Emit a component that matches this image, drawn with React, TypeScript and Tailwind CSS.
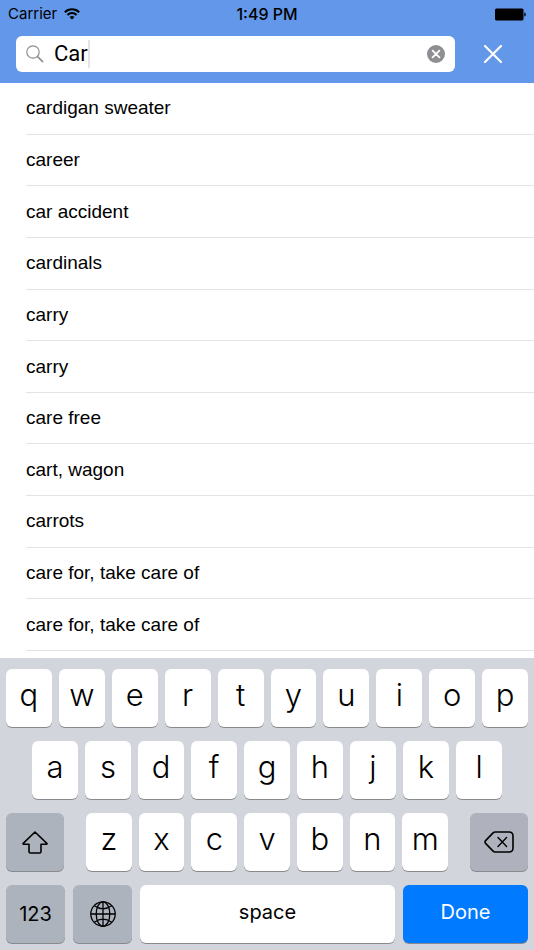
import { useState } from 'react'
import type { ReactNode } from 'react'

const suggestions = [
  'cardigan sweater',
  'career',
  'car accident',
  'cardinals',
  'carry',
  'carry',
  'care free',
  'cart, wagon',
  'carrots',
  'care for, take care of',
  'care for, take care of',
]

const topRow = ['q', 'w', 'e', 'r', 't', 'y', 'u', 'i', 'o', 'p']
const middleRow = ['a', 's', 'd', 'f', 'g', 'h', 'j', 'k', 'l']
const bottomRow = ['z', 'x', 'c', 'v', 'b', 'n', 'm']

interface LetterKeyProps {
  letter: string
  onPress: (letter: string) => void
}

function LetterKey({ letter, onPress }: LetterKeyProps) {
  return (
    <button
      type="button"
      onClick={() => onPress(letter)}
      className="flex h-[58px] min-w-0 flex-1 items-center justify-center rounded-md bg-white pb-1.5 text-[31px] leading-9 font-light shadow-[0_1px_0_#898a8d]"
    >
      {letter}
    </button>
  )
}

interface ActionKeyProps {
  label: string
  onClick?: () => void
  className: string
  children: ReactNode
}

function ActionKey({ label, onClick, className, children }: ActionKeyProps) {
  return (
    <button
      type="button"
      aria-label={label}
      onClick={onClick}
      className={`flex h-[58px] items-center justify-center rounded-md text-xl shadow-[0_1px_0_#898a8d] ${className}`}
    >
      {children}
    </button>
  )
}

export default function App() {
  const [query, setQuery] = useState('Car')

  const type = (text: string) => setQuery(query + text)

  return (
    <div className="flex min-h-screen flex-col bg-white font-['Inter',sans-serif] text-black">
      {/* Header */}
      <header className="bg-[#6297e9] pb-[11px]">
        <div className="grid h-7 grid-cols-3 items-center px-2 text-[15px] leading-5">
          <div className="flex items-center gap-[7px]">
            <span>Carrier</span>
            <svg viewBox="0 0 16 12" className="h-3 w-4" fill="none" stroke="currentColor" strokeWidth="2">
              <path d="M.8 4.2a10.2 10.2 0 0 1 14.4 0" />
              <path d="M3.4 7a6.5 6.5 0 0 1 9.2 0" />
              <path d="M8 11.6 5.5 9.1a3.6 3.6 0 0 1 5 0z" fill="currentColor" stroke="none" />
            </svg>
          </div>
          <div className="text-center text-base leading-5 font-medium">1:49 PM</div>
          <svg viewBox="0 0 32 13" className="h-[13px] w-8 justify-self-end" fill="currentColor">
            <rect x="1" y="0.5" width="28.5" height="12" rx="1.5" />
            <path d="M30.3 4.5c2 .6 2 3.4 0 4z" />
          </svg>
        </div>

        <div className="flex items-center pt-2 pl-4">
          <div className="flex h-9 flex-1 items-center rounded-md bg-white px-2.5">
            <label htmlFor="search" className="flex h-full flex-1 cursor-text items-center">
              <svg viewBox="0 0 18 18" className="mr-2.5 h-[18px] w-[18px]" fill="none" stroke="#8e8e93" strokeLinecap="round">
                <circle cx="7" cy="7" r="6.2" strokeWidth="1.2" />
                <path d="m11.6 11.6 5 5" strokeWidth="1.6" />
              </svg>
              <input
                id="search"
                type="text"
                aria-label="Search"
                value={query}
                onChange={(e) => setQuery(e.target.value)}
                className="field-sizing-content bg-transparent font-['Roboto',sans-serif] text-[22px] leading-7 outline-none"
              />
              <span className="h-7 w-0.5 bg-[#e4e4e6]" />
            </label>
            <button type="button" aria-label="Clear text" onClick={() => setQuery('')}>
              <svg viewBox="0 0 18 18" className="h-[18px] w-[18px]">
                <circle cx="9" cy="9" r="9" fill="#8e8e93" />
                <path d="m5.6 5.6 6.8 6.8m0-6.8-6.8 6.8" stroke="white" strokeWidth="1.8" strokeLinecap="round" />
              </svg>
            </button>
          </div>
          <button type="button" aria-label="Close" className="flex w-[79px] justify-center pr-1">
            <svg viewBox="0 0 18 18" className="h-[18px] w-[18px]" stroke="white" strokeWidth="2.2" strokeLinecap="round">
              <path d="m1 1 16 16M17 1 1 17" />
            </svg>
          </button>
        </div>
      </header>

      {/* Suggestions */}
      <ul className="flex flex-1 flex-col pb-[7px] pl-[26px] font-['Liberation_Sans',Arial,sans-serif] text-[19px] leading-6">
        {suggestions.map((item, index) => (
          <li key={index} className="flex flex-1 items-center border-b border-[#e3e3e5]">
            {item}
          </li>
        ))}
      </ul>

      {/* Keyboard */}
      <div className="flex flex-col gap-[14px] bg-[#d2d5dc] px-1.5 pt-[11px] pb-[7px]">
        <div className="flex gap-[7px]">
          {topRow.map((letter) => (
            <LetterKey key={letter} letter={letter} onPress={type} />
          ))}
        </div>

        <div className="flex gap-[7px] px-[26px]">
          {middleRow.map((letter) => (
            <LetterKey key={letter} letter={letter} onPress={type} />
          ))}
        </div>

        <div className="flex justify-between gap-[22px]">
          <ActionKey label="Shift" className="w-[58px] bg-[#acb3bd]">
            <svg viewBox="0 0 26 23" className="h-[23px] w-[26px]" fill="none" stroke="currentColor" strokeWidth="1.6" strokeLinejoin="round">
              <path d="M13 1 1.2 12.3q-.6.9.5 1H7v7.2q0 1.5 1.5 1.5h9q1.5 0 1.5-1.5v-7.2h5.3q1.1-.1.5-1z" />
            </svg>
          </ActionKey>
          <div className="flex flex-1 gap-[7px]">
            {bottomRow.map((letter) => (
              <LetterKey key={letter} letter={letter} onPress={type} />
            ))}
          </div>
          <ActionKey label="Delete" onClick={() => setQuery(query.slice(0, -1))} className="w-[58px] bg-[#afb2bd]">
            <svg viewBox="0 0 30 22" className="h-[22px] w-[30px]" fill="none" stroke="currentColor" strokeLinejoin="round" strokeLinecap="round">
              <path d="M11.5 1H25q4 0 4 4v12q0 4-4 4H11.5q-1.6 0-2.7-1.1l-7.2-7.5q-1.2-1.4 0-2.8l7.2-7.5Q9.9 1 11.5 1z" strokeWidth="1.6" />
              <path d="m14 6.6 8.6 8.8m0-8.8L14 15.4" strokeWidth="1.4" />
            </svg>
          </ActionKey>
        </div>

        <div className="flex gap-2">
          <ActionKey label="Numbers" className="w-[59px] bg-[#acb3bd]">
            123
          </ActionKey>
          <ActionKey label="Next keyboard" className="w-[59px] bg-[#acb3bd]">
            <svg viewBox="0 0 26 26" className="h-[26px] w-[26px]" fill="none" stroke="currentColor" strokeWidth="1.3">
              <circle cx="13" cy="13" r="12.2" />
              <ellipse cx="13" cy="13" rx="6.8" ry="12.2" />
              <path d="M13 .8v24.400M.8 13h24.400M4.300 4.800q8.700 6 17.400 0M4.300 21.200q8.700-6 17.400 0" />
            </svg>
          </ActionKey>
          <ActionKey label="Space" onClick={() => type(' ')} className="flex-1 bg-white pb-1">
            space
          </ActionKey>
          <ActionKey label="Done" className="w-[125px] bg-[#007aff] pb-1 text-white">
            Done
          </ActionKey>
        </div>
      </div>
    </div>
  )
}
